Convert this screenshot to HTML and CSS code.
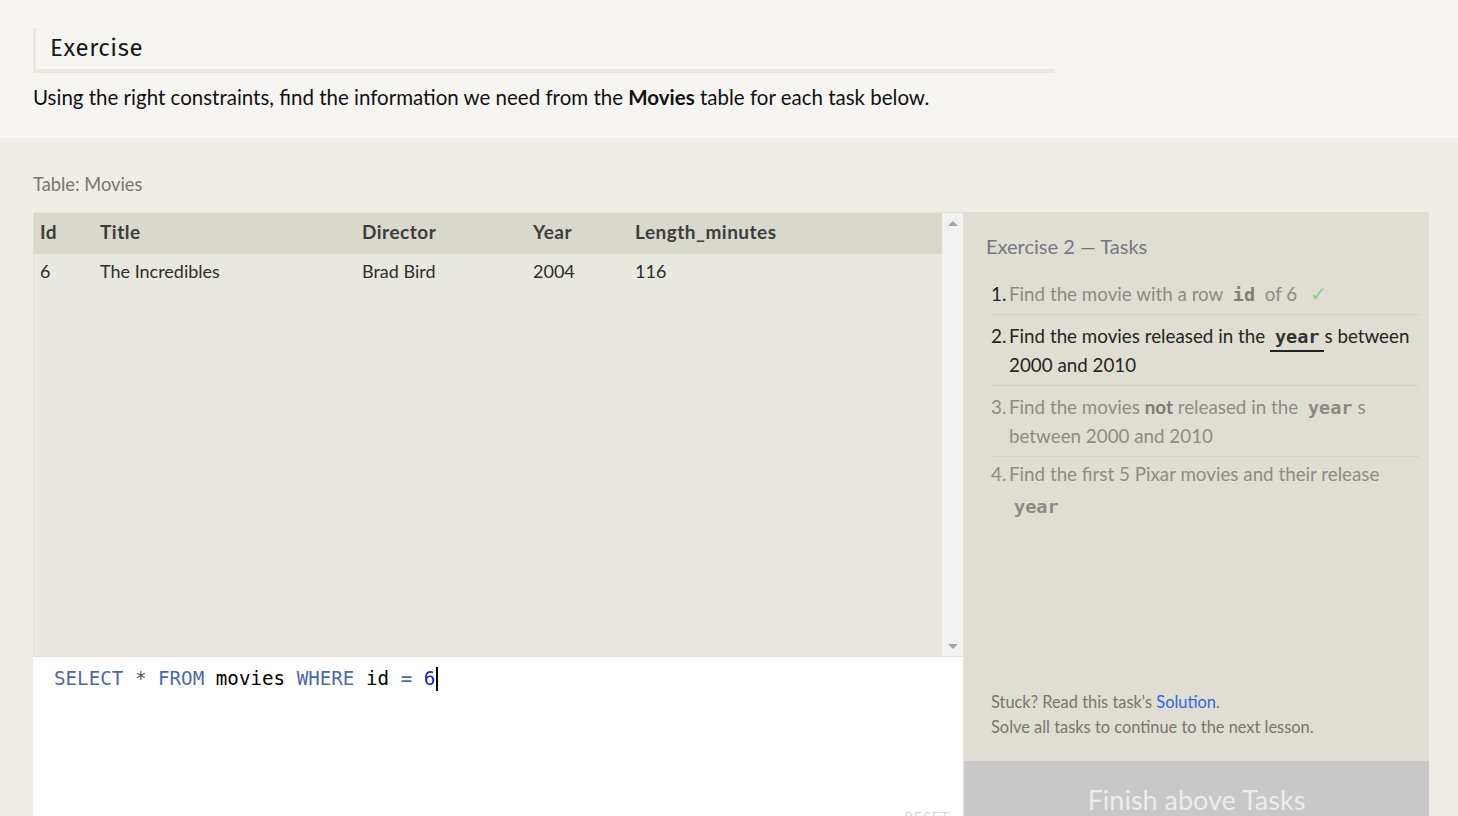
FILE: index.html
```html
<!DOCTYPE html>
<html>
<head>
<meta charset="utf-8">
<link rel="stylesheet" href="styles.css">
</head>
<body>
<section class="intro">
  <h1 class="title">Exercise</h1>
  <p class="lead">Using the right constraints, find the information we need from the <strong>Movies</strong> table for each task below.</p>
</section>
<section class="workspace">
  <div class="table-label">Table: Movies</div>
  <div class="panes">
    <div class="left">
      <div class="table-wrap">
        <div class="table-scroll">
          <table class="data">
            <thead>
              <tr><th class="c-id">Id</th><th class="c-title">Title</th><th class="c-dir">Director</th><th class="c-year">Year</th><th>Length_minutes</th></tr>
            </thead>
            <tbody>
              <tr><td>6</td><td>The Incredibles</td><td>Brad Bird</td><td>2004</td><td>116</td></tr>
            </tbody>
          </table>
        </div>
        <div class="scrollbar">
          <span class="arrow up"></span>
          <span class="arrow down"></span>
        </div>
      </div>
      <div class="editor">
        <div class="code"><span class="kw">SELECT</span> <span class="op">*</span> <span class="kw">FROM</span> <span class="id">movies</span> <span class="kw">WHERE</span> <span class="id">id</span> <span class="eq">=</span> <span class="num">6</span><span class="cursor"></span></div>
        <div class="reset">RESET</div>
      </div>
    </div>
    <aside class="tasks">
      <div class="tasks-body">
        <h2 class="tasks-title">Exercise 2 — Tasks</h2>
        <ol class="task-list">
          <li class="done"><span class="n">1.</span><span class="t">Find the movie with a row <code>id</code> of 6 <span class="check">✓</span></span></li>
          <li class="current"><span class="n">2.</span><span class="t">Find the movies released in the <code class="ul">year</code>s between 2000 and 2010</span></li>
          <li class="todo"><span class="n">3.</span><span class="t">Find the movies <b>not</b> released in the <code>year</code>s between 2000 and 2010</span></li>
          <li class="todo last"><span class="n">4.</span><span class="t">Find the first 5 Pixar movies and their release <code class="block">year</code></span></li>
        </ol>
        <div class="help">
          <p>Stuck? Read this task's <a href="#">Solution</a>.</p>
          <p>Solve all tasks to continue to the next lesson.</p>
        </div>
      </div>
      <div class="finish">Finish above Tasks</div>
    </aside>
  </div>
</section>
</body>
</html>
```
FILE: styles.css
```css
html, body {
  margin: 0;
  padding: 0;
  height: 816px;
  overflow: hidden;
}
body {
  font-family: Lato, "Open Sans", sans-serif;
  background: #efede6;
  color: #111;
}
.intro {
  background: #f6f5f1;
  height: 138px;
  padding: 28px 0 0 33px;
  box-sizing: border-box;
}
.title {
  margin: 0;
  width: 1022px;
  box-sizing: border-box;
  height: 45px;
  border-left: 3px solid #e9e7de;
  border-bottom: 4px solid #e9e7de;
  padding-left: 14px;
  font-family: "Fira Sans", "Open Sans", sans-serif;
  font-weight: 400;
  font-size: 24px;
  line-height: 40px;
  letter-spacing: 0.6px;
  color: #1a1a1a;
}
.lead {
  margin: 11px 0 0;
  font-size: 20.5px;
  line-height: 26px;
  color: #111;
}
.lead strong { font-weight: 700; }

.workspace {
  padding: 34px 29px 0 33px;
}
.table-label {
  font-size: 18.3px;
  color: #787670;
  line-height: 24px;
  height: 24px;
}
.panes {
  display: flex;
  margin-top: 16px;
  height: 604px;
}
.left {
  width: 930px;
  display: flex;
  flex-direction: column;
}
.table-wrap {
  display: flex;
  height: 444px;
  border-top: 1px solid #e3e2d9;
  box-sizing: border-box;
  background: #e9e8e0;
}
.table-scroll {
  flex: 1;
  border-left: 1px solid #e0dfd6;
}
.data {
  width: 100%;
  border-collapse: collapse;
  font-size: 18px;
  color: #333;
}
.data th {
  background: #d9d8cc;
  text-align: left;
  font-weight: 700;
  font-size: 19px;
  letter-spacing: 0.5px;
  color: #3d3d3d;
  height: 41px;
  padding: 0 0 5px 6px;
  box-sizing: border-box;
}
.data td {
  height: 34px;
  padding: 0 0 5px 6px;
  color: #2e2e2e;
}
.c-id { width: 60px; }
.c-title { width: 262px; }
.c-dir { width: 171px; }
.c-year { width: 102px; }
.scrollbar {
  width: 21px;
  background: #f1f1f1;
  display: flex;
  flex-direction: column;
  justify-content: space-between;
  align-items: center;
  padding: 8px 0 7px;
  box-sizing: border-box;
}
.arrow {
  width: 0;
  height: 0;
  border-left: 5px solid transparent;
  border-right: 5px solid transparent;
}
.arrow.up { border-bottom: 5px solid #a3a3a3; }
.arrow.down { border-top: 5px solid #a3a3a3; }
.editor {
  flex: 1;
  background: #fff;
  border-top: 1px solid #e1e0d8;
  position: relative;
}
.code {
  font-family: "DejaVu Sans Mono", "Liberation Mono", monospace;
  font-size: 19.2px;
  line-height: 24px;
  padding: 10px 0 0 21px;
  color: #000;
  white-space: pre;
}
.kw { color: #4d6aa8; }
.op { color: #555; }
.id { color: #000; }
.eq { color: #4d6aa8; }
.num { color: #1c25b8; }
.cursor {
  display: inline-block;
  width: 2px;
  height: 24px;
  background: #000;
  margin-left: 1px;
  vertical-align: top;
}
.reset {
  position: absolute;
  right: 13px;
  bottom: -9px;
  font-size: 14px;
  letter-spacing: 1px;
  color: #d6d6d6;
}

.tasks {
  width: 466px;
  background: #e0ded3;
  display: flex;
  flex-direction: column;
  border-left: 1px solid #e6e4dc;
  box-sizing: border-box;
}
.tasks-body {
  flex: 1;
  padding: 21px 10px 0 22px;
  display: flex;
  flex-direction: column;
}
.tasks-title {
  margin: 0;
  font-weight: 400;
  font-size: 20px;
  line-height: 26px;
  color: #747780;
}
.task-list {
  list-style: none;
  margin: 20px 0 0;
  padding: 0 0 0 5px;
  font-size: 18.8px;
  line-height: 29px;
}
.task-list li {
  display: flex;
  border-bottom: 1px solid #d4d2c7;
  padding: 6px 0 6px;
}
.task-list li:first-child { padding-top: 0; }
.task-list li.last { border-bottom: none; padding-top: 2px; }
.task-list .n {
  width: 18px;
  flex: none;
  color: #222;
}
.task-list .t { flex: 1; }
.task-list li.done .t { color: #8b8a85; }
.task-list li.current .t { color: #252525; }
.task-list li.todo .t, .task-list li.todo .n { color: #8d8c86; }
.task-list li.todo b { color: #7d7c77; }
.task-list code {
  font-family: "DejaVu Sans Mono", "Liberation Mono", monospace;
  font-weight: 700;
  font-size: 18.5px;
  line-height: 20px;
  padding: 0 5px;
}
.task-list li.done code { color: #7f7e7a; }
.task-list li.current code { color: #333; }
.task-list li.todo code { color: #8b8a85; }
.task-list code.ul {
  border-bottom: 2px solid #222;
  padding-bottom: 3px;
}
.task-list code.block {
  display: block;
  margin-top: 4px;
  line-height: 29px;
}
.check {
  color: #8fcf8f;
  margin-left: 8px;
  font-size: 20px;
}
.help {
  margin-top: auto;
  padding: 0 0 22px 5px;
  font-size: 16.4px;
  line-height: 25px;
  color: #77756f;
}
.help p { margin: 0; }
.help a {
  color: #2f68e0;
  text-decoration: none;
}
.finish {
  height: 55px;
  background: #c8c8c8;
  color: #ececec;
  font-size: 27px;
  text-align: center;
  line-height: 78px;
  overflow: hidden;
}
```
